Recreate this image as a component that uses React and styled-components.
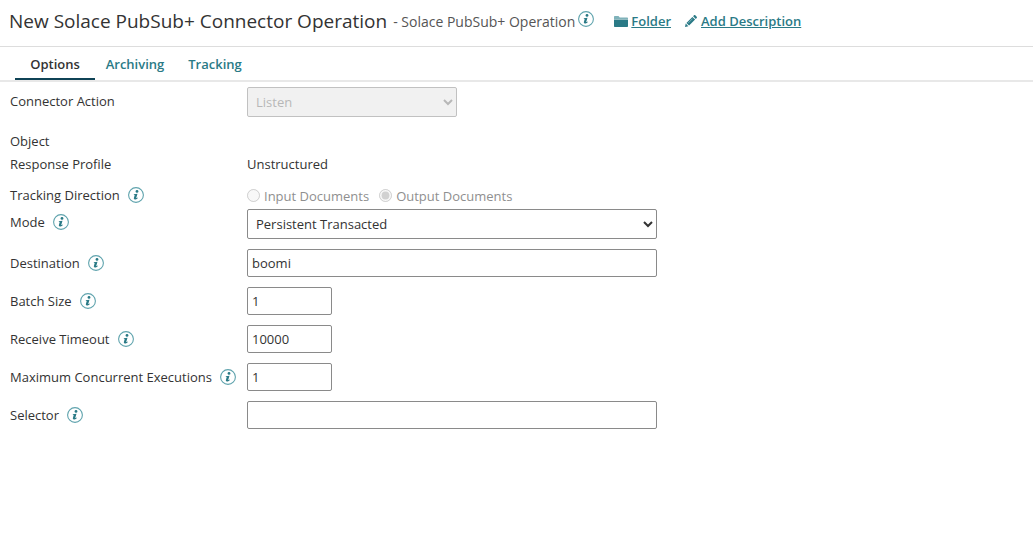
import React from "react";
import styled, { createGlobalStyle } from "styled-components";

const GlobalStyle = createGlobalStyle`
  body {
    margin: 0;
    background: #fff;
    font-family: "Open Sans", "Liberation Sans", sans-serif;
    font-size: 13px;
    color: #333;
  }
`;

const Header = styled.header`
  height: 42px;
  display: flex;
  align-items: center;
  padding: 0 0 4px 9px;
  border-bottom: 1px solid #ddd;
`;

const Title = styled.h1`
  margin: 0;
  font-size: 19px;
  font-weight: 400;
  color: #333;
`;

const Subtitle = styled.span`
  margin-left: 6px;
  font-size: 14px;
  color: #555;
`;

const HeaderLink = styled.a`
  display: flex;
  align-items: center;
  gap: ${(p) => p.$gap}px;
  margin-left: ${(p) => p.$left}px;
  font-size: 13px;
  font-weight: 600;
  color: #2a7a86;
  span {
    text-decoration: underline;
  }
`;

const Tabs = styled.nav`
  display: flex;
  height: 33px;
  padding-left: 15px;
  border-bottom: 2px solid #e8e8e8;
`;

const Tab = styled.div`
  width: 80px;
  text-align: center;
  line-height: 35px;
  font-weight: 600;
  color: ${(p) => (p.$active ? "#333" : "#2a7a86")};
  height: 33px;
  box-sizing: border-box;
  border-bottom: ${(p) => (p.$active ? "2px solid #0f4356" : "none")};
`;

const Form = styled.form`
  padding-left: 10px;
`;

const Row = styled.div`
  display: grid;
  grid-template-columns: 237px 1fr;
  align-items: center;
  height: ${(p) => p.$height}px;
  margin-top: ${(p) => p.$top}px;
`;

const Label = styled.div`
  display: flex;
  align-items: center;
  gap: 8px;
  margin-bottom: ${(p) => p.$lift || 0}px;
  color: #333;
  white-space: nowrap;
`;

const Info = styled.svg`
  flex: none;
  width: 16px;
  height: 16px;
  margin-left: ${(p) => p.$left || 0}px;
  margin-bottom: ${(p) => p.$lift || 0}px;
`;

const Select = styled.select`
  width: ${(p) => p.$width}px;
  height: 30px;
  padding: 0 4px;
  font: inherit;
  color: #333;
  background: #fff;
  border: 1px solid #8a8a8a;
  border-radius: 2px;
  &:disabled {
    color: #9a9a9a;
    background: #ececec;
    border-color: #a8a8a8;
  }
`;

const Input = styled.input`
  display: block;
  box-sizing: border-box;
  width: ${(p) => p.$width}px;
  height: 28px;
  padding: 0 4px;
  font: inherit;
  color: #333;
  border: 1px solid #8a8a8a;
  border-radius: 2px;
`;

const Radios = styled.div`
  display: flex;
  align-items: center;
  color: #8f8f8f;
`;

const RadioLabel = styled.label`
  display: flex;
  align-items: center;
  gap: 4px;
  margin-right: 10px;
  span {
    position: relative;
    top: 1px;
  }
  input {
    margin: 0;
    width: 13px;
    height: 13px;
  }
`;

const InfoIcon = ({ left, lift }) => (
  <Info viewBox="0 0 16 16" $left={left} $lift={lift}>
    <circle cx="8" cy="8" r="7.4" fill="none" stroke="#5fa3ad" strokeWidth="1.1" />
    <circle cx="9" cy="4.4" r="1.4" fill="#2a7a86" />
    <path
      d="M5.9 7.2 L9.5 6.7 L8.3 10.8 C8.2 11.2 8.6 11.2 9.6 10.5 L9.9 11 C8.8 12.1 7.8 12.5 6.9 12.5 C6 12.5 5.7 11.9 5.9 11.1 L6.7 8.1 L5.8 7.9 Z"
      fill="#2a7a86"
    />
  </Info>
);

const FolderIcon = () => (
  <svg width="14" height="11" viewBox="0 0 14 11">
    <path d="M0 1 C0 .4 .4 0 1 0 H4.5 L5.8 1.4 H13 C13.6 1.4 14 1.8 14 2.4 V3 H0 Z" fill="#7fb2ba" />
    <path d="M0 3.6 H14 V10 C14 10.6 13.6 11 13 11 H1 C.4 11 0 10.6 0 10 Z" fill="#2a7a86" />
  </svg>
);

const PencilIcon = () => (
  <svg width="12" height="12" viewBox="0 0 12 12">
    <path d="M0 12 L.7 8.6 L3.4 11.3 Z M1.4 7.9 L7.4 1.9 L10.1 4.6 L4.1 10.6 Z M8.1 1.2 L9 .3 C9.4 -.1 9.9 -.1 10.3 .3 L11.7 1.7 C12.1 2.1 12.1 2.6 11.7 3 L10.8 3.9 Z" fill="#2a7a86" />
    <path d="M3 8.2 L7.6 3.6" stroke="#9cc4ca" strokeWidth=".7" />
  </svg>
);

const App = () => {
  return (
    <>
      <GlobalStyle />
      <Header>
        <Title>New Solace PubSub+ Connector Operation</Title>
        <Subtitle>- Solace PubSub+ Operation</Subtitle>
        <InfoIcon left={3} lift={4} />
        <HeaderLink $left={20} $gap={3}>
          <FolderIcon />
          <span>Folder</span>
        </HeaderLink>
        <HeaderLink $left={14} $gap={4}>
          <PencilIcon />
          <span>Add Description</span>
        </HeaderLink>
      </Header>
      <Tabs>
        <Tab $active>Options</Tab>
        <Tab>Archiving</Tab>
        <Tab>Tracking</Tab>
      </Tabs>
      <Form>
        <Row $top={5} $height={30}>
          <Label $lift={2}>Connector Action</Label>
          <Select disabled $width={210} defaultValue="Listen">
            <option>Listen</option>
          </Select>
        </Row>
        <Row $top={13} $height={22}>
          <Label>Object</Label>
        </Row>
        <Row $top={1} $height={22}>
          <Label>Response Profile</Label>
          <div>Unstructured</div>
        </Row>
        <Row $top={9} $height={22}>
          <Label>Tracking Direction <InfoIcon /></Label>
          <Radios>
            <RadioLabel><input type="radio" name="dir" disabled /><span>Input Documents</span></RadioLabel>
            <RadioLabel><input type="radio" name="dir" disabled defaultChecked /><span>Output Documents</span></RadioLabel>
          </Radios>
        </Row>
        <Row $top={3} $height={30}>
          <Label $lift={4}>Mode <InfoIcon /></Label>
          <Select $width={410} defaultValue="Persistent Transacted">
            <option>Persistent Transacted</option>
          </Select>
        </Row>
        <Row $top={10} $height={28}>
          <Label>Destination <InfoIcon /></Label>
          <Input $width={410} defaultValue="boomi" />
        </Row>
        <Row $top={10} $height={28}>
          <Label>Batch Size <InfoIcon /></Label>
          <Input $width={85} defaultValue="1" />
        </Row>
        <Row $top={10} $height={28}>
          <Label>Receive Timeout <InfoIcon /></Label>
          <Input $width={85} defaultValue="10000" />
        </Row>
        <Row $top={10} $height={28}>
          <Label>Maximum Concurrent Executions <InfoIcon /></Label>
          <Input $width={85} defaultValue="1" />
        </Row>
        <Row $top={10} $height={28}>
          <Label>Selector <InfoIcon /></Label>
          <Input $width={410} />
        </Row>
      </Form>
    </>
  );
};

export default App;
